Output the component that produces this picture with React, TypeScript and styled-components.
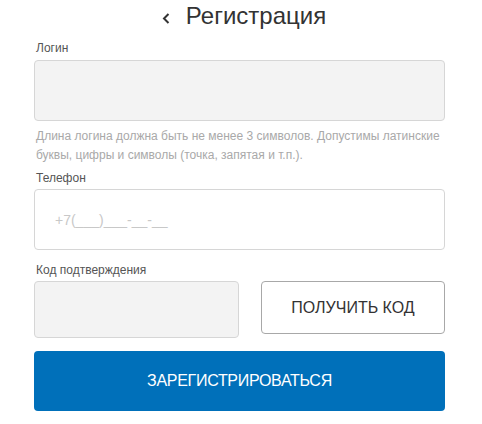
import styled, { createGlobalStyle } from "styled-components";

const GlobalStyle = createGlobalStyle`
  body {
    margin: 0;
    background: #fff;
    font-family: "Liberation Sans", Arial, sans-serif;
  }
`;

const Page = styled.div`
  width: 482px;
  padding: 0 37px 0 34px;
  box-sizing: border-box;
`;

const Header = styled.header`
  height: 32px;
  display: flex;
  justify-content: center;
  align-items: center;
  gap: 16px;
  padding-left: 9px;
  margin-bottom: 8px;
`;

const Back = styled.button`
  border: 0;
  background: none;
  padding: 0;
  display: flex;
  cursor: pointer;
  margin-top: 4px;
`;

const Title = styled.h1`
  margin: 0;
  font-size: 24px;
  font-weight: 400;
  line-height: 32px;
  color: #333;
`;

const Label = styled.label<{ $gap?: number }>`
  display: block;
  font-size: 12px;
  line-height: 16px;
  color: #555;
  padding-left: 2px;
  margin-bottom: ${(p) => p.$gap ?? 3}px;
`;

const Input = styled.input<{ $filled?: boolean }>`
  display: block;
  width: 100%;
  height: 61px;
  box-sizing: border-box;
  border: 1px solid #d6d6d6;
  border-radius: 4px;
  background: ${(p) => (p.$filled ? "#f3f3f3" : "#fff")};
  padding: 0 20px;
  font-family: inherit;
  font-size: 14px;
  color: #333;
  outline: none;

  &::placeholder {
    color: #c8c8c8;
  }
`;

const Hint = styled.p`
  margin: 6px 0 5px;
  padding-left: 2px;
  font-size: 12px;
  line-height: 19px;
  color: #a9a9a9;
`;

const Row = styled.div`
  display: flex;
  align-items: flex-start;
  gap: 22px;
  margin-bottom: 13px;
`;

const CodeInput = styled(Input)`
  width: 205px;
  height: 57px;
  flex: none;
`;

const CodeButton = styled.button`
  flex: 1;
  height: 53px;
  border: 1px solid #a8a8a8;
  border-radius: 4px;
  background: #fff;
  font-family: inherit;
  font-size: 16px;
  color: #333;
  cursor: pointer;
`;

const Submit = styled.button`
  display: block;
  width: 100%;
  height: 60px;
  border: 0;
  border-radius: 4px;
  background: #0070ba;
  color: #fff;
  font-family: inherit;
  font-size: 16px;
  letter-spacing: -0.3px;
  text-transform: uppercase;
  cursor: pointer;
`;

const Field = styled.div<{ $top?: number }>`
  margin-top: ${(p) => p.$top ?? 0}px;
`;

export default function App() {
  return (
    <>
      <GlobalStyle />
      <Page>
        <Header>
          <Back aria-label="Назад">
            <svg width="8" height="11" viewBox="0 0 8 11">
              <polyline points="6.5,1 2,5.5 6.5,10" fill="none" stroke="#333" strokeWidth="2" />
            </svg>
          </Back>
          <Title>Регистрация</Title>
        </Header>

        <Field>
          <Label $gap={4}>Логин</Label>
          <Input $filled />
          <Hint>
            Длина логина должна быть не менее 3 символов. Допустимы латинские
            <br />
            буквы, цифры и символы (точка, запятая и т.п.).
          </Hint>
        </Field>

        <Field>
          <Label>Телефон</Label>
          <Input placeholder="+7(___)___-__-__" />
        </Field>

        <Field $top={12}>
          <Label>Код подтверждения</Label>
          <Row>
            <CodeInput $filled />
            <CodeButton>ПОЛУЧИТЬ КОД</CodeButton>
          </Row>
        </Field>

        <Submit>Зарегистрироваться</Submit>
      </Page>
    </>
  );
}
